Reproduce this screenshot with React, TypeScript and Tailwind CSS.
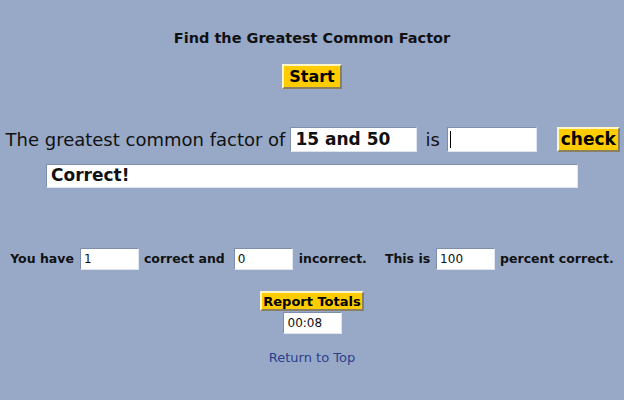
import React from 'react';

const font = { fontFamily: '"DejaVu Sans", Verdana, sans-serif' };

const Field = ({ value, className = '' }: { value: string; className?: string }) => (
  <div
    className={`shrink-0 bg-white border border-t-[#7d8db0] border-l-[#7d8db0] border-b-[#dfe5ef] border-r-[#dfe5ef] flex items-center whitespace-nowrap ${className}`}
  >
    {value}
  </div>
);

const YellowButton = ({ label, className = '' }: { label: string; className?: string }) => (
  <button
    className={`shrink-0 bg-[#ffcc00] border-2 border-t-[#fff6c8] border-l-[#fff6c8] border-b-[#8a8060] border-r-[#8a8060] font-bold text-black flex items-center justify-center leading-none whitespace-nowrap ${className}`}
  >
    {label}
  </button>
);

export default function App() {
  return (
    <div className="w-[624px] h-[400px] bg-[#98a9c8] text-[#111] flex flex-col items-center" style={font}>
      <h1 className="mt-[29px] text-[14.5px] font-bold leading-[18px] whitespace-nowrap">Find the Greatest Common Factor</h1>

      <YellowButton label="Start" className="mt-[17px] w-[60px] h-[25px] text-[16px]" />

      <div className="mt-[38px] flex items-center h-[25px] w-[614px] ml-[1px] whitespace-nowrap">
        <span className="text-[18px]">The greatest common factor of</span>
        <Field value="15 and 50" className="ml-[5px] w-[127px] h-[25px] pl-[4px] text-[17px] font-bold" />
        <span className="ml-[8px] text-[18px]">is</span>
        <div className="shrink-0 ml-[7px] w-[90px] h-[25px] bg-white border border-t-[#7d8db0] border-l-[#7d8db0] border-b-[#dfe5ef] border-r-[#dfe5ef] flex items-center pl-[2px]">
          <div className="w-[1px] h-[17px] bg-black" />
        </div>
        <YellowButton label="check" className="ml-[20px] w-[63px] h-[25px] text-[17px]" />
      </div>

      <Field value="Correct!" className="mt-[12px] w-[532px] h-[24px] pl-[4px] text-[17px] font-bold self-start ml-[46px]" />

      <div className="mt-[60px] flex items-center text-[12.5px] font-bold h-[22px] whitespace-nowrap">
        <span>You have</span>
        <Field value="1" className="ml-[6px] w-[59px] h-[22px] pl-[3px] text-[12px] font-normal" />
        <span className="ml-[5px]">correct and</span>
        <Field value="0" className="ml-[9px] w-[59px] h-[22px] pl-[3px] text-[12px] font-normal" />
        <span className="ml-[6px]">incorrect.</span>
        <span className="ml-[18px]">This is</span>
        <Field value="100" className="ml-[6px] w-[59px] h-[22px] pl-[3px] text-[12px] font-normal" />
        <span className="ml-[5px]">percent correct.</span>
      </div>

      <YellowButton label="Report Totals" className="mt-[21px] w-[104px] h-[20px] text-[13px]" />
      <Field value="00:08" className="mt-[1px] w-[59px] h-[22px] pl-[4px] text-[12px] font-normal" />

      <a href="#" className="mt-[16px] text-[13px] text-[#2a3f8c] leading-[16px]">Return to Top</a>
    </div>
  );
}
